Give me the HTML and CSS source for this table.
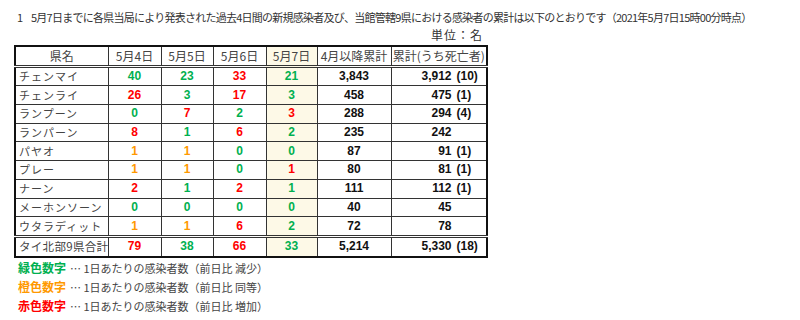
FILE: index.html
```html
<!DOCTYPE html>
<html lang="ja">
<head>
<meta charset="utf-8">
<link rel="stylesheet" href="styles.css">
</head>
<body>
<div class="page">
  <p class="title"><span class="num">1</span>5月7日までに各県当局により発表された過去4日間の新規感染者及び、当館管轄9県における感染者の累計は以下のとおりです（2021年5月7日15時00分時点）</p>
  <div class="block">
    <div class="unit">単位：名</div>
    <table class="tbl">
      <colgroup>
        <col class="c-name"><col class="c-d1"><col class="c-d2"><col class="c-d3"><col class="c-d4"><col class="c-sum"><col class="c-tot">
      </colgroup>
      <thead>
        <tr><th>県名</th><th>5月4日</th><th>5月5日</th><th>5月6日</th><th class="today">5月7日</th><th>4月以降累計</th><th>累計(うち死亡者)</th></tr>
      </thead>
      <tbody>
        <tr><td class="name">チェンマイ</td><td class="g">40</td><td class="g">23</td><td class="r">33</td><td class="g today">21</td><td class="n">3,843</td><td class="t"><span class="tn">3,912</span><span class="tp">(10)</span></td></tr>
        <tr><td class="name">チェンライ</td><td class="r">26</td><td class="g">3</td><td class="r">17</td><td class="g today">3</td><td class="n">458</td><td class="t"><span class="tn">475</span><span class="tp">(1)</span></td></tr>
        <tr><td class="name">ランプーン</td><td class="g">0</td><td class="r">7</td><td class="g">2</td><td class="r today">3</td><td class="n">288</td><td class="t"><span class="tn">294</span><span class="tp">(4)</span></td></tr>
        <tr><td class="name">ランパーン</td><td class="r">8</td><td class="g">1</td><td class="r">6</td><td class="g today">2</td><td class="n">235</td><td class="t"><span class="tn">242</span></td></tr>
        <tr><td class="name">パヤオ</td><td class="o">1</td><td class="o">1</td><td class="g">0</td><td class="g today">0</td><td class="n">87</td><td class="t"><span class="tn">91</span><span class="tp">(1)</span></td></tr>
        <tr><td class="name">プレー</td><td class="o">1</td><td class="o">1</td><td class="g">0</td><td class="r today">1</td><td class="n">80</td><td class="t"><span class="tn">81</span><span class="tp">(1)</span></td></tr>
        <tr><td class="name">ナーン</td><td class="r">2</td><td class="g">1</td><td class="r">2</td><td class="g today">1</td><td class="n">111</td><td class="t"><span class="tn">112</span><span class="tp">(1)</span></td></tr>
        <tr><td class="name">メーホンソーン</td><td class="g">0</td><td class="g">0</td><td class="g">0</td><td class="g today">0</td><td class="n">40</td><td class="t"><span class="tn">45</span></td></tr>
        <tr><td class="name">ウタラディット</td><td class="o">1</td><td class="o">1</td><td class="r">6</td><td class="g today">2</td><td class="n">72</td><td class="t"><span class="tn">78</span></td></tr>
        <tr class="total"><td class="name">タイ北部9県合計</td><td class="r">79</td><td class="g">38</td><td class="r">66</td><td class="g today">33</td><td class="n">5,214</td><td class="t"><span class="tn">5,330</span><span class="tp">(18)</span></td></tr>
      </tbody>
    </table>
    <ul class="legend">
      <li><span class="lab g">緑色数字</span><span class="desc">… 1日あたりの感染者数（前日比 減少）</span></li>
      <li><span class="lab o">橙色数字</span><span class="desc">… 1日あたりの感染者数（前日比 同等）</span></li>
      <li><span class="lab r">赤色数字</span><span class="desc">… 1日あたりの感染者数（前日比 増加）</span></li>
    </ul>
  </div>
</div>
</body>
</html>
```
FILE: styles.css
```css
html, body {
  margin: 0;
  padding: 0;
  background: #fff;
}
.page {
  padding: 9px 0 0 17px;
  font-family: "Noto Sans CJK JP", "Noto Sans", sans-serif;
  color: #333;
}
.title {
  margin: 0;
  font-size: 11px;
  letter-spacing: -0.75px;
  line-height: 16px;
  height: 16px;
  white-space: nowrap;
}
.title .num {
  display: inline-block;
  width: 14px;
}
.block {
  margin-left: -3px;
  width: 472px;
}
.unit {
  text-align: right;
  font-size: 12px;
  line-height: 19px;
  height: 20px;
  padding-right: 3px;
  letter-spacing: 1px;
}
.tbl {
  border-collapse: collapse;
  table-layout: fixed;
  width: 472px;
  border: 2px solid #111;
}
.c-name { width: 93px; }
.c-d1 { width: 53px; }
.c-d2 { width: 52px; }
.c-d3 { width: 53px; }
.c-d4 { width: 51px; }
.c-sum { width: 74px; }
.c-tot { width: 96px; }
.tbl th, .tbl td {
  border: 1px solid #333;
  height: 17.7px;
  padding: 0;
  line-height: 17px;
  text-align: center;
  white-space: nowrap;
}
.tbl th {
  font-weight: normal;
  font-size: 12px;
  color: #444;
  border-bottom: 3px double #333;
}
.tbl td {
  font-family: "Liberation Sans", Arial, sans-serif;
  font-weight: bold;
  font-size: 12px;
  color: #111;
}
.tbl td.name {
  font-family: "Noto Sans CJK JP", sans-serif;
  font-weight: normal;
  font-size: 11px;
  letter-spacing: 1px;
  color: #444;
  text-align: left;
  padding-left: 3px;
}
.tbl .total td {
  border-top: 3px double #333;
}
.tbl .total td.name {
  letter-spacing: 0.3px;
  font-size: 11.5px;
}
.tbl .today {
  background: #fdf9e7;
}
.tbl td.t {
  text-align: left;
  padding-left: 1px;
}
.tn {
  display: inline-block;
  width: 59px;
  text-align: right;
}
.tp {
  margin-left: 5px;
}
.g { color: #00b050 !important; }
.o { color: #ff9900 !important; }
.r { color: #ff0000 !important; }
.legend {
  list-style: none;
  margin: -1px 0 0 0;
  padding: 0 0 0 4px;
}
.legend li {
  line-height: 19px;
  height: 19px;
  white-space: nowrap;
}
.lab {
  font-weight: bold;
  font-size: 12px;
}
.desc {
  font-size: 11px;
  color: #444;
  margin-left: 4px;
}
```
